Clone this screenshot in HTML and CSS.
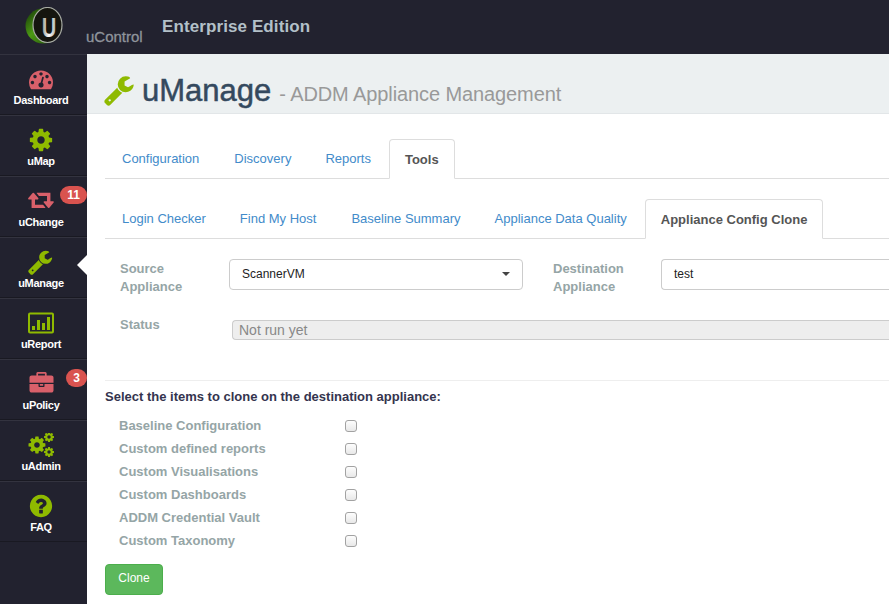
FILE: index.html
```html
<!DOCTYPE html>
<html>
	<head>
		<meta charset="UTF-8">
		<title>uManage</title>
		<link rel="stylesheet" href="styles.css">
	</head>
	<body>
		<header class="topbar">
			<div class="logo-box">
				<svg class="logo" width="38" height="38" viewBox="0 0 38 38">
					<defs>
						<linearGradient id="sphere" x1="0" y1="0" x2="1" y2="1">
							<stop offset="0" stop-color="#123006"/>
							<stop offset="0.45" stop-color="#4c9a14"/>
							<stop offset="1" stop-color="#1b3f0a"/>
						</linearGradient>
						<linearGradient id="letter" x1="0" y1="0" x2="1" y2="0">
							<stop offset="0" stop-color="#8d918c"/>
							<stop offset="0.5" stop-color="#ffffff"/>
							<stop offset="1" stop-color="#a8aca6"/>
						</linearGradient>
					</defs>
					<circle cx="18" cy="19" r="17.500" fill="url(#sphere)"/>
					<ellipse cx="22.500" cy="18" rx="14.500" ry="17.500" fill="#15150f" stroke="#a9ada5" stroke-width="1.200"/>
					<text class="logo-u" transform="translate(24 30) scale(.72 1)" text-anchor="middle" fill="url(#letter)">U</text>
				</svg>
			</div>
			<span class="brand">uControl</span>
			<span class="edition">Enterprise Edition</span>
		</header>
		<div class="layout">
			<nav class="sidebar">
				<a class="nav-item"><svg class="red" width="24" height="24" viewBox="0 0 1792 1792"><path d="M384 1152q0-53-37.500-90.500t-90.500-37.500-90.500 37.500-37.500 90.500 37.500 90.500 90.500 37.500 90.500-37.500 37.500-90.500zm192-448q0-53-37.500-90.500t-90.500-37.500-90.500 37.500-37.500 90.500 37.500 90.500 90.500 37.500 90.500-37.500 37.500-90.500zm428 481l101-382q6-26-7.500-48.500t-38.500-29.500-48 6.500-30 39.500l-101 382q-60 5-107 43.500t-63 98.500q-20 77 20 146t117 89 146-20 89-117q16-60-6-117t-72-91zm660-33q0-53-37.500-90.500t-90.500-37.500-90.500 37.500-37.500 90.500 37.500 90.500 90.500 37.500 90.500-37.500 37.500-90.500zm-640-640q0-53-37.500-90.500t-90.500-37.500-90.500 37.500-37.500 90.500 37.500 90.500 90.500 37.500 90.500-37.500 37.500-90.500zm448 192q0-53-37.500-90.500t-90.500-37.500-90.500 37.500-37.500 90.500 37.500 90.500 90.500 37.500 90.500-37.500 37.500-90.500zm320 448q0 261-141 483-19 29-54 29h-1402q-35 0-54-29-141-221-141-483 0-182 71-348t191-286 286-191 348-71 348 71 286 191 191 286 71 348z"/></svg><span>Dashboard</span></a>
				<a class="nav-item"><svg class="green big" viewBox="0 0 1792 1792"><path d="M1152 896q0-106-75-181t-181-75-181 75-75 181 75 181 181 75 181-75 75-181zm512-109v222q0 12-8 23t-20 13l-185 28q-19 54-39 91 35 50 107 138 10 12 10 25t-9 23q-27 37-99 108t-94 71q-12 0-26-9l-138-108q-44 23-91 38-16 136-29 186-7 28-36 28h-222q-14 0-24.500-8.500t-11.500-21.500l-28-184q-49-16-90-37l-141 107q-10 9-25 9-14 0-25-11-126-114-165-168-7-10-7-23 0-12 8-23 15-21 51-66.500t54-70.500q-27-50-41-99l-183-27q-13-2-21-12.500t-8-23.500v-222q0-12 8-23t19-13l186-28q14-46 39-92-40-57-107-138-10-12-10-24 0-10 9-23 26-36 98.500-107.500t94.500-71.500q13 0 26 10l138 107q44-23 91-38 16-136 29-186 7-28 36-28h222q14 0 24.500 8.500t11.500 21.500l28 184q49 16 90 37l142-107q9-9 24-9 13 0 25 10 129 119 165 170 7 8 7 22 0 12-8 23-15 21-51 66.500t-54 70.500q26 50 41 98l183 28q13 2 21 12.500t8 23.500z"/></svg><span>uMap</span></a>
				<a class="nav-item"><svg class="red" width="26" height="24" viewBox="0 0 1920 1792"><path d="M1280 1392q0 13-9.500 22.500t-22.500 9.500h-960q-8 0-13.500-2t-9-7-5.500-8-3-11.500-1-11.500v-600h-192q-26 0-45-19t-19-45q0-24 15-41l320-384q19-22 49-22t49 22l320 384q15 17 15 41 0 26-19 45t-45 19h-192v384h576q16 0 25 11l160 192q7 9 7 21zm640-416q0 24-15 41l-320 384q-20 23-49 23t-49-23l-320-384q-15-17-15-41 0-26 19-45t45-19h192v-384h-576q-16 0-25-12l-160-192q-7-9-7-20 0-13 9.500-22.500t22.500-9.500h960q8 0 13.500 2t9 7 5.500 8 3 11.500 1 11.500v600h192q26 0 45 19t19 45z"/></svg><span>uChange</span><b class="badge badge-wide">11</b></a>
				<a class="nav-item nav-active"><svg class="green big" viewBox="0 0 1792 1792"><path d="M384 1472q0-26-19-45t-45-19-45 19-19 45 19 45 45 19 45-19 19-45zm644-420l-682 682q-37 37-90 37-52 0-91-37l-106-108q-38-36-38-90 0-53 38-91l681-681q39 98 114.500 173.500t173.500 114.500zm634-435q0 39-23 106-47 134-164.500 217.500t-258.500 83.500q-185 0-316.500-131.500t-131.500-316.500 131.500-316.500 316.500-131.500q58 0 121.500 16.500t107.500 46.500q16 11 16 28t-16 28l-293 169v224l193 107q5-3 79-48.500t135.500-81 70.500-35.500q15 0 23.500 10t8.500 25z"/></svg><span>uManage</span></a>
				<a class="nav-item"><svg class="green" width="26" height="24" viewBox="0 0 26 24"><path fill-rule="evenodd" d="M2 1.500 H24 Q26 1.500 26 3.500 V20.500 Q26 22.500 24 22.500 H2 Q0 22.500 0 20.500 V3.500 Q0 1.500 2 1.500 Z M2 3.500 V20.500 H24 V3.500 Z"/><rect x="4" y="15" width="3" height="4"/><rect x="9" y="9" width="3" height="10"/><rect x="14" y="12" width="3" height="7"/><rect x="19" y="6" width="3" height="13"/></svg><span>uReport</span></a>
				<a class="nav-item"><svg class="red" width="25" height="24" viewBox="0 0 1792 1792"><path d="M640 256h512v-128h-512v128zm1152 640v480q0 66-47 113t-113 47h-1472q-66 0-113-47t-47-113v-480h672v160q0 26 19 45t45 19h320q26 0 45-19t19-45v-160h672zm-768 0v128h-256v-128h256zm768-480v384h-1792v-384q0-66 47-113t113-47h352v-160q0-40 28-68t68-28h576q40 0 68 28t28 68v160h352q66 0 113 47t47 113z"/></svg><span>uPolicy</span><b class="badge">3</b></a>
				<a class="nav-item"><svg class="green" width="26" height="24" viewBox="0 0 26 24"><defs><path id="cog" d="M1152 896q0-106-75-181t-181-75-181 75-75 181 75 181 181 75 181-75 75-181zm512-109v222q0 12-8 23t-20 13l-185 28q-19 54-39 91 35 50 107 138 10 12 10 25t-9 23q-27 37-99 108t-94 71q-12 0-26-9l-138-108q-44 23-91 38-16 136-29 186-7 28-36 28h-222q-14 0-24.500-8.500t-11.500-21.500l-28-184q-49-16-90-37l-141 107q-10 9-25 9-14 0-25-11-126-114-165-168-7-10-7-23 0-12 8-23 15-21 51-66.500t54-70.500q-27-50-41-99l-183-27q-13-2-21-12.500t-8-23.500v-222q0-12 8-23t19-13l186-28q14-46 39-92-40-57-107-138-10-12-10-24 0-10 9-23 26-36 98.500-107.500t94.500-71.500q13 0 26 10l138 107q44-23 91-38 16-136 29-186 7-28 36-28h222q14 0 24.500 8.500t11.500 21.500l28 184q49 16 90 37l142-107q9-9 24-9 13 0 25 10 129 119 165 170 7 8 7 22 0 12-8 23-15 21-51 66.500t-54 70.500q26 50 41 98l183 28q13 2 21 12.500t8 23.500z"/></defs><use href="#cog" transform="translate(-.9 2.100) scale(.011)"/><use href="#cog" transform="translate(15.200 -1.800) scale(.0065)"/><use href="#cog" transform="translate(15.200 13.200) scale(.0065)"/></svg><span>uAdmin</span></a>
				<a class="nav-item"><svg class="green big" viewBox="0 0 1792 1792"><path d="M1024 1376v-192q0-14-9-23t-23-9h-192q-14 0-23 9t-9 23v192q0 14 9 23t23 9h192q14 0 23-9t9-23zm256-672q0-88-55.500-163t-138.500-116-170-41q-243 0-371 213-15 24 8 42l132 100q7 6 19 6 16 0 25-12 53-68 86-92 34-24 86-24 48 0 85.500 26t37.500 59q0 38-20 61t-68 45q-63 28-115.500 86.500t-52.500 125.500v36q0 14 9 23t23 9h192q14 0 23-9t9-23q0-19 21.500-49.500t54.500-49.500q32-18 49-28.500t46-35 44.500-48 28-60.500 12.500-81zm384 192q0 209-103 385.500t-279.500 279.500-385.500 103-385.500-103-279.500-279.500-103-385.500 103-385.500 279.500-279.500 385.500-103 385.500 103 279.500 279.500 103 385.500z"/></svg><span>FAQ</span></a>
			</nav>
			<main class="content">
				<div class="page-head">
					<svg class="green head-icon" width="32" height="32" viewBox="0 0 1792 1792"><path d="M384 1472q0-26-19-45t-45-19-45 19-19 45 19 45 45 19 45-19 19-45zm644-420l-682 682q-37 37-90 37-52 0-91-37l-106-108q-38-36-38-90 0-53 38-91l681-681q39 98 114.500 173.500t173.500 114.500zm634-435q0 39-23 106-47 134-164.500 217.500t-258.500 83.500q-185 0-316.500-131.500t-131.500-316.500 131.500-316.500 316.500-131.500q58 0 121.500 16.500t107.500 46.500q16 11 16 28t-16 28l-293 169v224l193 107q5-3 79-48.500t135.500-81 70.500-35.500q15 0 23.500 10t8.500 25z"/></svg>
					<h1>uManage</h1>
					<small>- ADDM Appliance Management</small>
				</div>
				<div class="panel">
					<ul class="tabs tabs-main">
						<li><a>Configuration</a></li>
						<li><a>Discovery</a></li>
						<li><a>Reports</a></li>
						<li class="active"><a>Tools</a></li>
					</ul>
					<ul class="tabs tabs-sub">
						<li><a>Login Checker</a></li>
						<li><a>Find My Host</a></li>
						<li><a>Baseline Summary</a></li>
						<li><a>Appliance Data Quality</a></li>
						<li class="active"><a>Appliance Config Clone</a></li>
					</ul>
					<div class="form-row">
						<label class="field-label source-label">Source<br>Appliance</label>
						<div class="select-box"><span>ScannerVM</span><i class="caret"></i></div>
						<label class="field-label dest-label">Destination<br>Appliance</label>
						<div class="text-box">test</div>
					</div>
					<div class="status-row">
						<label class="field-label source-label status-label">Status</label>
						<div class="status-bar">Not run yet</div>
					</div>
					<hr>
					<p class="clone-title">Select the items to clone on the destination appliance:</p>
					<div class="checks">
						<label>Baseline Configuration</label><input type="checkbox">
						<label>Custom defined reports</label><input type="checkbox">
						<label>Custom Visualisations</label><input type="checkbox">
						<label>Custom Dashboards</label><input type="checkbox">
						<label>ADDM Credential Vault</label><input type="checkbox">
						<label>Custom Taxonomy</label><input type="checkbox">
					</div>
					<button class="btn-clone">Clone</button>
				</div>
			</main>
		</div>
	</body>
</html>
```

FILE: styles.css
```css
* {margin:0; padding:0; box-sizing:border-box;}
html, body {width:889px; height:604px; overflow:hidden;}
body {background:#fff; font-family:"Liberation Sans", Arial, sans-serif; font-size:13px; color:#333;}
li {list-style:none;}
svg.red {fill:#d9606a;}
svg.green {fill:#8fba00;}

.topbar {height:54px; background:#22222f; display:flex; position:relative;}
.logo-box {width:86px; padding:7px 0 0 25px;}
.logo-u {font-family:"Liberation Sans", sans-serif; font-weight:bold; font-size:28px;}
.brand {font-size:15px; color:#8f949c; margin-top:28px; line-height:18px; width:76px; -webkit-text-stroke:0.3px #8f949c;}
.edition {font-size:17px; font-weight:bold; letter-spacing:.1px; color:#b3c0c8; margin-top:17px; line-height:20px;}

.layout {display:flex; height:550px;}
.sidebar {width:87px; flex:none; background:#22222f;}
.nav-item {display:flex; flex-direction:column; align-items:center; height:61px; padding:12px 5px 0 0; border-top:1px solid #33333f; border-bottom:1px solid #191922; position:relative; color:#fff; font-size:11px; font-weight:bold;}
.nav-item svg.big {width:26px; height:26px; margin:-1px 0;}
.nav-item span {line-height:14px; margin-top:2px; letter-spacing:-.3px;}
.nav-active:after {content:""; position:absolute; right:0; top:17px; border:10px solid transparent; border-left:0; border-right-color:#fff;}
.badge {position:absolute; right:0; top:9px; height:18px; width:21px; border-radius:9px; background:#d9534f; color:#fff; font-size:12px; line-height:18px; text-align:center;}
.badge-wide {width:27px;}

.content {flex:1; min-width:0;}
.page-head {height:60px; background:#ecf0f1; border-bottom:1px solid #e2e6e8; display:flex; align-items:center; padding:13px 0 0 17px;}
.head-icon {flex:none; margin-right:6px;}
.page-head h1 {font-size:31px; font-weight:normal; color:#34495e; -webkit-text-stroke:0.5px #34495e; line-height:36px; margin:2px 8px 0 0;}
.page-head small {font-size:20px; letter-spacing:-.1px; color:#999; line-height:36px; margin-top:7px;}

.panel {padding:25px 0 0 18px;}
.tabs {display:flex; border-bottom:1px solid #ddd; height:40px; padding-left:1px;}
.tabs li {margin-right:2px;}
.tabs-main li:first-child, .tabs-sub li:nth-child(2) {margin-right:3px;}
.tabs a {display:block; height:40px; padding:0 16px; line-height:39px; color:#428bca;}
.tabs .active a {background:#fff; border:1px solid #ddd; border-bottom-color:#fff; border-radius:4px 4px 0 0; color:#555; font-weight:bold; padding:0 15px; line-height:40px;}
.tabs-sub {margin-top:20px;}

.field-label {font-weight:bold; color:#95a5a6; line-height:18px;}
.form-row {display:flex; margin-top:20px; height:61px;}
.form-row .field-label {padding-top:1px;}
.source-label {width:124px; padding-left:15px; flex:none;}
.status-label {margin-top:-4px;}
.select-box {width:294px; height:31px; border:1px solid #ccc; border-radius:4px; padding:0 12px 2px; color:#222; font-size:12px; display:flex; justify-content:space-between; align-items:center; flex:none;}
.caret {border:4px solid transparent; border-top-color:#444; border-bottom:0;}
.dest-label {width:108px; margin-left:30px; flex:none;}
.text-box {flex:1; height:31px; border:1px solid #ccc; border-right:0; border-radius:4px 0 0 4px; padding:0 12px; line-height:29px; color:#222; font-size:12px;}

.status-row {display:flex;}
.status-bar {flex:1; height:20px; margin-left:3px; background:#eee; border:1px solid #ccc; border-right:0; border-radius:4px 0 0 4px; padding-left:6px; line-height:18px; font-size:14px; color:#888;}
.panel hr {border:0; border-top:1px solid #eee; margin-top:40px;}
.clone-title {font-weight:bold; color:#34344e; line-height:18px; margin-top:7px;}
.checks {display:grid; grid-template-columns:226px 20px; grid-auto-rows:23px; margin:8px 0 0 14px; align-items:center; font-weight:bold; color:#95a5a6;}
.checks input {appearance:none; -webkit-appearance:none; width:12px; height:12px; margin:0; border:1px solid #a2a2a2; border-radius:3px; background:linear-gradient(#fdfdfd, #e8e8e8);}
.btn-clone {display:block; margin-top:12px; width:58px; height:31px; padding-bottom:3px; background:#5cb85c; border:1px solid #4cae4c; border-radius:4px; color:#fff; font:12px "Liberation Sans", sans-serif;}
```
